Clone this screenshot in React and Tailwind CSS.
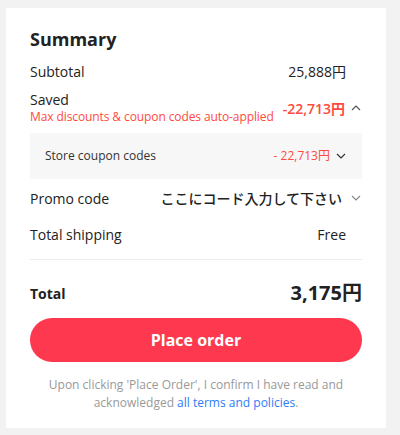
import React from 'react';

const ChevronUp = () => (
  <svg width="12" height="12" viewBox="0 0 12 12" fill="none" stroke="#555" strokeWidth="1.2">
    <path d="M2 8l4-4 4 4" />
  </svg>
);

const ChevronDown = ({ color = '#555' }) => (
  <svg width="12" height="12" viewBox="0 0 12 12" fill="none" stroke={color} strokeWidth="1.2">
    <path d="M2 4l4 4 4-4" />
  </svg>
);

const App = () => {
  return (
    <div className="min-h-screen bg-[#f2f2f2] pt-[8px] px-[6px]" style={{ fontFamily: '"Open Sans", "Noto Sans CJK JP", sans-serif' }}>
      <div className="bg-white w-[380px] h-[420px] px-6 pt-[19px]">
        <h2 className="text-[18px] font-bold leading-[24px] text-[#222]">Summary</h2>

        <div className="flex items-center justify-between mt-[9px] h-[22px] text-[14px] text-[#222]">
          <span>Subtotal</span>
          <span className="pr-[16px]">25,888円</span>
        </div>

        <div className="flex items-center justify-between gap-[6px] mt-[9px]">
          <div className="flex flex-col">
            <span className="text-[14px] leading-[18px] text-[#222]">Saved</span>
            <span className="text-[12px] leading-[16px] tracking-[-0.1px] text-[#ff4a3d] whitespace-nowrap">Max discounts &amp; coupon codes auto-applied</span>
          </div>
          <div className="flex items-center gap-[5px] shrink-0">
            <span className="text-[14px] font-semibold text-[#ff4a3d]">-22,713円</span>
            <ChevronUp />
          </div>
        </div>

        <div className="flex items-center justify-between mt-[8px] h-[46px] bg-[#f7f7f7] px-[15px] text-[12px]">
          <span className="text-[#333]">Store coupon codes</span>
          <div className="flex items-center gap-[5px]">
            <span className="text-[#ff4a3d]">- 22,713円</span>
            <ChevronDown color="#333" />
          </div>
        </div>

        <div className="flex items-center justify-between h-[38px] text-[14px] text-[#222]">
          <span>Promo code</span>
          <div className="flex items-center gap-[8px]">
            <span className="text-[14px] font-medium">ここにコード入力して下さい</span>
            <ChevronDown color="#888" />
          </div>
        </div>

        <div className="flex items-center justify-between h-[34px] text-[14px] text-[#222]">
          <span>Total shipping</span>
          <span className="pr-[16px]">Free</span>
        </div>

        <div className="border-t border-[#ececec] mt-[8px]" />

        <div className="flex items-center justify-between mt-[20px] h-[26px] text-[#222]">
          <span className="text-[14px] font-bold">Total</span>
          <span className="text-[20px] font-bold">3,175円</span>
        </div>

        <button className="mt-[12px] w-full h-[44px] rounded-full bg-[#fe384f] text-white text-[16px] font-bold">
          Place order
        </button>

        <p className="mt-[14px] text-center text-[12px] leading-[18px] text-[#999]">
          Upon clicking 'Place Order', I confirm I have read and acknowledged{' '}
          <span className="text-[#2e7cf6]">all terms and policies</span>.
        </p>
      </div>
    </div>
  );
};

export default App;
